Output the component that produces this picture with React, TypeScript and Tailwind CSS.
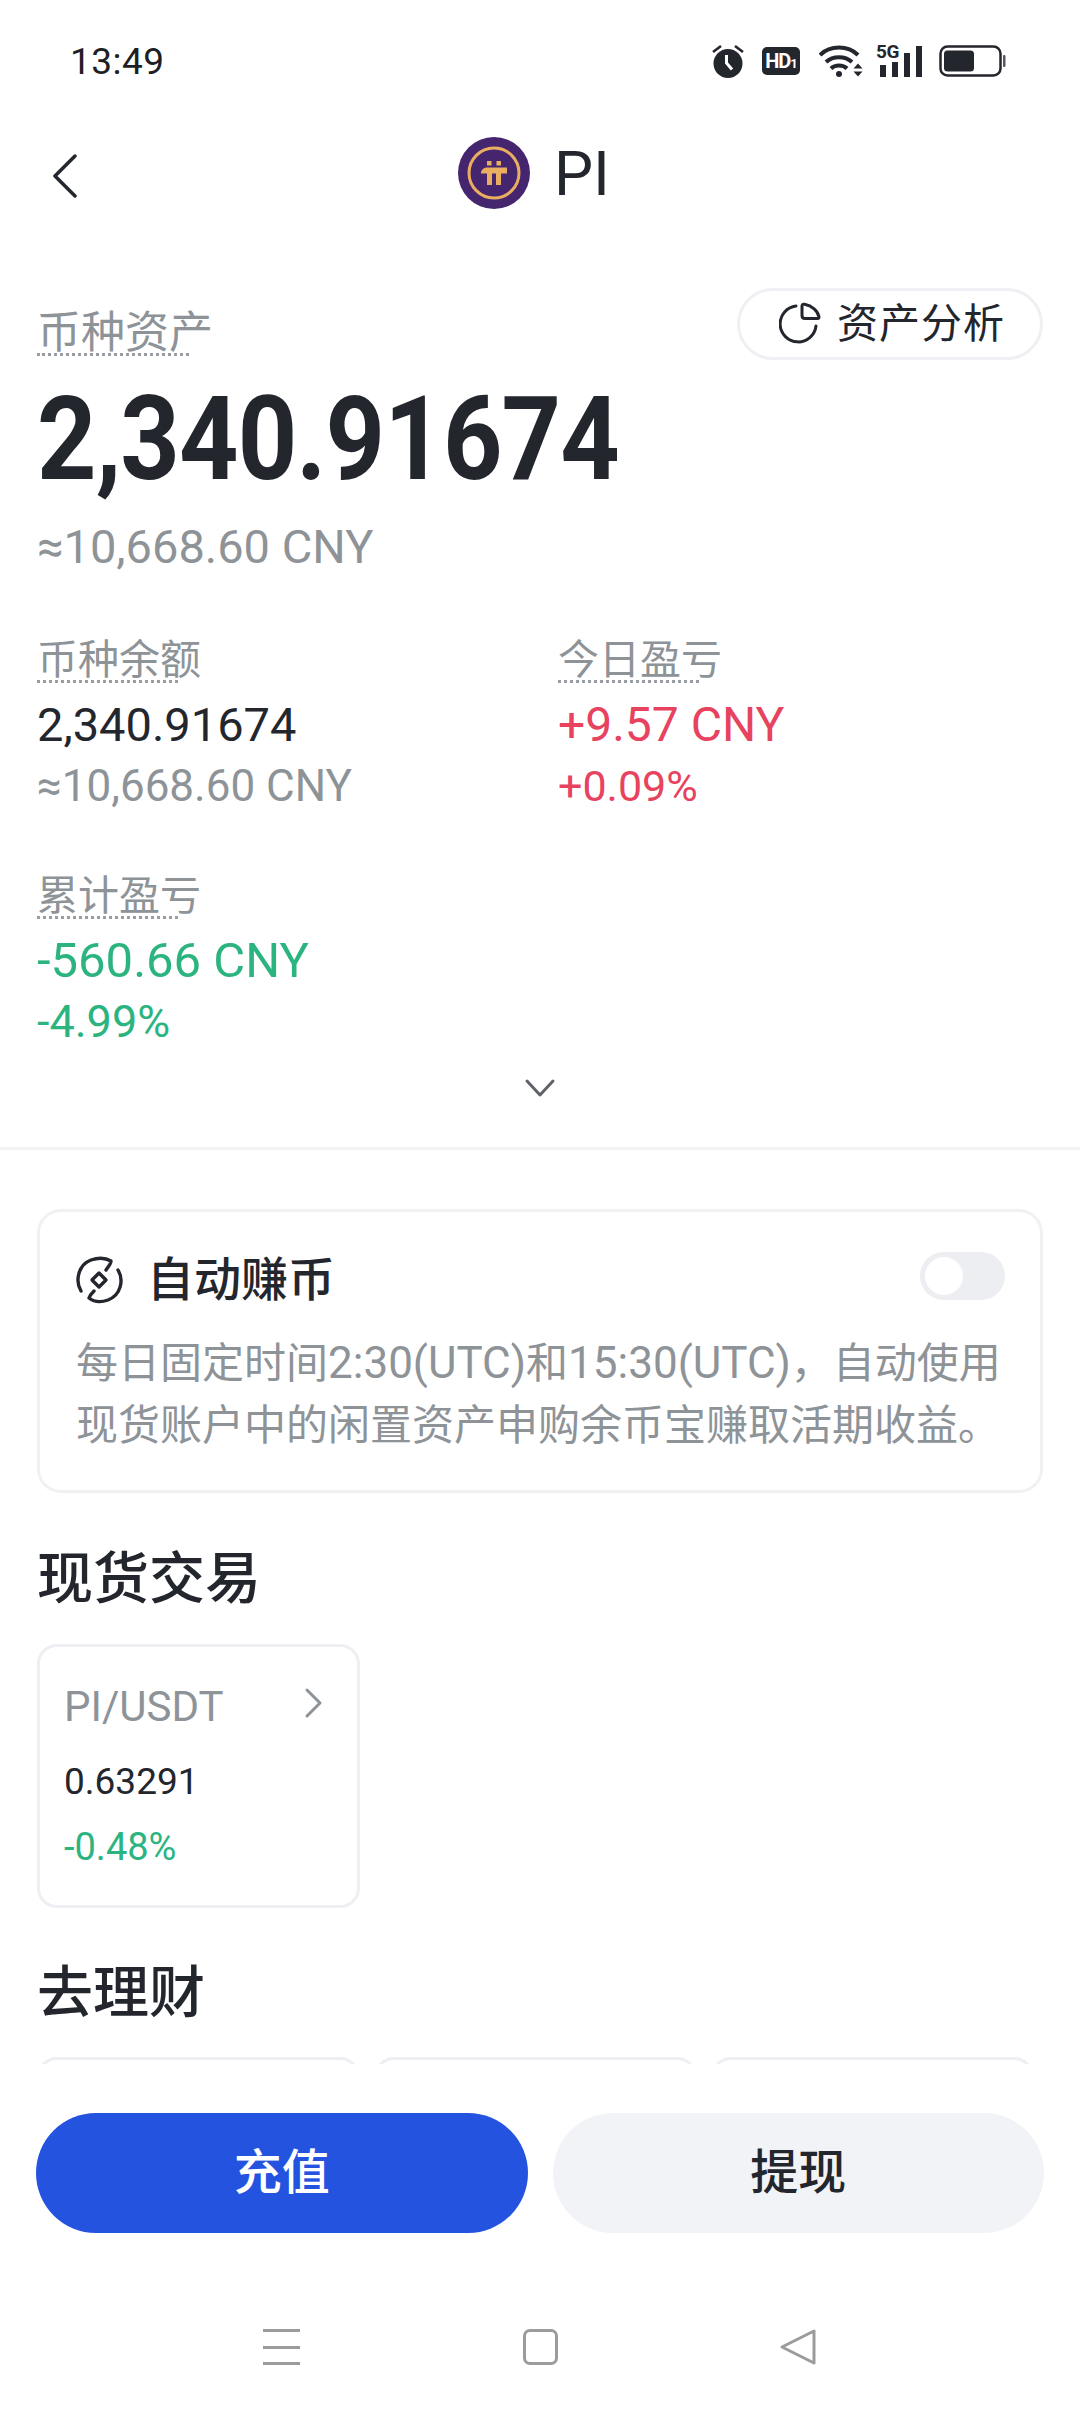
const sans = "font-['Roboto','Noto_Sans_CJK_SC',sans-serif]";

function AlarmIcon() {
  return (
    <svg width="32" height="34" viewBox="0 0 32 34" fill="none">
      <circle cx="16" cy="19.500" r="14.500" fill="#23262d" />
      <path d="M14.500 11v8l5.500 6.500" stroke="#fff" strokeWidth="3" />
      <path d="M1 8l8-6M31 8l-8-6" stroke="#23262d" strokeWidth="2.600" />
    </svg>
  );
}

function WifiIcon() {
  return (
    <svg width="44" height="34" viewBox="0 0 44 34" fill="none">
      <path d="M1 11C11 1 29 1 39 11" stroke="#23262d" strokeWidth="4" />
      <path d="M7 18C14 11.500 26 11.500 33 18" stroke="#23262d" strokeWidth="4" />
      <path d="M12 24.500C16 20.500 24 20.500 28 24.500" stroke="#23262d" strokeWidth="4" />
      <circle cx="20" cy="30" r="3" fill="#23262d" />
      <path d="M34.500 24.500l4.500-5 4.500 5zM34.500 27.500h9l-4.500 5z" fill="#23262d" />
    </svg>
  );
}

function SignalIcon() {
  return (
    <div className="relative w-[47px] h-[34px]">
      <span className="absolute left-0 top-[-2px] text-[19px] leading-[20px] font-bold text-[#23262d] font-['Roboto',sans-serif] tracking-[-0.5px]">
        5G
      </span>
      <svg className="absolute inset-0" width="47" height="34" viewBox="0 0 47 34" fill="#23262d">
        <rect x="4" y="21" width="6" height="12" />
        <rect x="16" y="18" width="6" height="15" />
        <rect x="28" y="9" width="6" height="24" />
        <rect x="40" y="2" width="6" height="31" />
      </svg>
    </div>
  );
}

function BatteryIcon() {
  return (
    <svg width="67" height="32" viewBox="0 0 67 32" fill="none">
      <rect x="1.500" y="1.500" width="60" height="29" rx="7" stroke="#23262d" strokeWidth="2.500" />
      <rect x="5" y="5.500" width="30" height="21" rx="3.500" fill="#23262d" />
      <rect x="64" y="10" width="2.500" height="12" rx="1" fill="#55585e" />
    </svg>
  );
}

function PiLogo() {
  return (
    <svg width="72" height="72" viewBox="0 0 72 72" fill="none">
      <circle cx="36" cy="36" r="36" fill="#46256f" />
      <circle cx="36" cy="36" r="25" stroke="#eaae60" strokeWidth="3" />
      <path d="M23 35c1-3 3-4.500 6-4.500h20v6H23z" fill="#eaae60" />
      <rect x="29" y="34" width="5" height="14" fill="#eaae60" />
      <rect x="38" y="34" width="5" height="14" fill="#eaae60" />
      <rect x="29" y="24" width="4.500" height="4.500" fill="#eaae60" />
      <rect x="38.500" y="24" width="4.500" height="4.500" fill="#eaae60" />
    </svg>
  );
}

function PieIcon() {
  return (
    <svg width="44" height="44" viewBox="10 8 44 44" fill="none" stroke="#23262d" strokeWidth="3" strokeLinecap="round" strokeLinejoin="round">
      <path d="M27 12A18 18 0 1 0 47 32" />
      <path d="M33 12c0-1.500 1-2 2.500-1.800C43 11.500 49 17 50 23c0 1-.5 1.500-1.500 1.500H36c-2 0-3-1-3-3z" />
    </svg>
  );
}

function EarnIcon() {
  return (
    <svg width="50" height="52" viewBox="8 6 50 52" fill="none" stroke="#23262d" strokeWidth="3.400" strokeLinecap="round" strokeLinejoin="round">
      <path d="M15 43C9 33 12 17 25 12 32 9.500 40 10 45 13 45 16 42 19 40 22" />
      <path d="M52 22C58 32 55 47 42 52 35 54.500 28 54 23 50 24 47 26 45 28 43" />
      <path d="M33 25l7 7-7 7-7-7z" />
    </svg>
  );
}

function BackIcon() {
  return (
    <svg width="26" height="44" viewBox="0 0 26 44" fill="none" stroke="#23262d" strokeWidth="3.500" strokeLinecap="round" strokeLinejoin="round">
      <path d="M23 2L3 22l20 20" />
    </svg>
  );
}

// gray label with the short dashed line under it
function Label({ text, size, lineClass }: { text: string; size: string; lineClass: string }) {
  return (
    <div>
      <div className={`${size} leading-[50px] text-[#8e9398]`}>{text}</div>
      <div className={`h-0 -mt-[5px] border-b-[3px] border-dotted border-[#9a9ea3] ${lineClass}`}></div>
    </div>
  );
}

export default function App() {
  const cards = ["a", "b", "c"];

  return (
    <div className={`${sans} w-[1080px] h-[2412px] bg-white flex flex-col overflow-hidden text-[#23262d]`}>
      {/* status bar */}
      <div className="h-[122px] shrink-0 flex items-center justify-between pl-[70px] pr-[74px]">
        <span className="text-[37px] tracking-[0.5px] text-[#1d1f24] mt-[2px]">13:49</span>
        <div className="flex items-center">
          <AlarmIcon />
          <div className="ml-[18px] w-[38px] h-[28px] rounded-[5px] bg-[#23262d] text-white text-[20px] leading-[28px] font-bold text-center tracking-[-1px]">
            HD<span className="text-[13px]">1</span>
          </div>
          <div className="ml-[19px]">
            <WifiIcon />
          </div>
          <div className="ml-[13px]">
            <SignalIcon />
          </div>
          <div className="ml-[16px]">
            <BatteryIcon />
          </div>
        </div>
      </div>

      {/* title */}
      <div className="relative h-[102px] shrink-0 flex items-center justify-center gap-[24px] pr-[12px]">
        <div className="absolute left-[52px] top-[32px]">
          <BackIcon />
        </div>
        <PiLogo />
        <span className="text-[62px] text-[#23262d]">PI</span>
      </div>

      <div className="flex-1 min-h-0 overflow-hidden">
        <div className="px-[37px]">
          <div className="flex justify-between items-start pt-[64px] h-[134px]">
            <div className="pt-[20px]">
              <Label text="币种资产" size="text-[44px]" lineClass="w-[152px]" />
            </div>
            <div className="h-[72px] w-[306px] rounded-full border-[3px] border-[#eff0f3] flex items-center pl-[39px] gap-[14px]">
              <PieIcon />
              <span className="text-[41px] leading-none tracking-[1px]">资产分析</span>
            </div>
          </div>
          <div className="text-[116px] leading-[120px] font-bold tracking-[-1px] mt-[21px] origin-left scale-x-[0.895] whitespace-nowrap">
            2,340.91674
          </div>
          <div className="text-[47px] leading-[60px] text-[#8e9398] mt-[18px]">≈10,668.60 CNY</div>

          <div className="grid grid-cols-[521px_1fr] mt-[58px]">
            <div>
              <Label text="币种余额" size="text-[41px]" lineClass="w-[141px]" />
              <div className="text-[47px] leading-[60px] mt-[12px]">2,340.91674</div>
              <div className="text-[44px] leading-[60px] text-[#8e9398] mt-[1px]">≈10,668.60 CNY</div>
            </div>
            <div>
              <Label text="今日盈亏" size="text-[41px]" lineClass="w-[141px]" />
              <div className="text-[48px] leading-[60px] mt-[12px] text-[#e7435f]">+9.57 CNY</div>
              <div className="text-[43px] leading-[60px] mt-[1px] text-[#e7435f]">+0.09%</div>
            </div>
          </div>

          <div className="mt-[55px]">
            <Label text="累计盈亏" size="text-[41px]" lineClass="w-[141px]" />
            <div className="text-[49px] leading-[60px] mt-[12px] text-[#2bb47f]">-560.66 CNY</div>
            <div className="text-[45px] leading-[60px] mt-[1px] text-[#2bb47f]">-4.99%</div>
          </div>
        </div>

        <div className="flex justify-center h-[98px] pt-[17px] border-b-[3px] border-[#f1f2f4]">
          <svg width="32" height="24" viewBox="0 0 32 24" fill="none" stroke="#5f6368" strokeWidth="3" strokeLinecap="round" strokeLinejoin="round" className="mt-[8px]">
            <path d="M3 4l13 14L29 4" />
          </svg>
        </div>

        <div className="px-[37px]">
          <div className="mt-[59px] h-[284px] rounded-[24px] border-[3px] border-[#f0f1f3] pl-[34px] pr-[35px] pt-[38px]">
            <div className="flex items-center justify-between h-[60px]">
              <div className="flex items-center gap-[23px]">
                <EarnIcon />
                <span className="text-[47px] font-medium">自动赚币</span>
              </div>
              <div className="w-[85px] h-[48px] -mt-[9px] rounded-full bg-[#eceef2] p-[5px]">
                <div className="w-[38px] h-[38px] rounded-full bg-white"></div>
              </div>
            </div>
            <p className="text-[42px] leading-[62px] text-[#8e9398] mt-[22px] ml-[2px] whitespace-nowrap">
              每日固定时间<span className="text-[44px]">2:30(UTC)</span>和<span className="text-[44px]">15:30(UTC)</span>，自动使用
              <br />
              现货账户中的闲置资产申购余币宝赚取活期收益。
            </p>
          </div>

          <h2 className="text-[56px] leading-[70px] font-medium mt-[51px]">现货交易</h2>

          <div className="mt-[30px] w-[323px] h-[264px] rounded-[20px] border-[3px] border-[#eeeff2] px-[24px]">
            <div className="flex items-center justify-between pt-[32px]">
              <span className="text-[42px] leading-[56px] text-[#8e9398]">PI/USDT</span>
              <svg width="22" height="32" viewBox="0 0 22 32" fill="none" stroke="#8e9398" strokeWidth="3" strokeLinecap="round" strokeLinejoin="round" className="mr-[9px] -mt-[8px]">
                <path d="M5 3l13 13L5 29" />
              </svg>
            </div>
            <div className="text-[37px] leading-[44px] mt-[25px]">0.63291</div>
            <div className="text-[38px] leading-[44px] mt-[21px] text-[#2bb47f]">-0.48%</div>
          </div>

          <h2 className="text-[56px] leading-[70px] font-medium mt-[50px]">去理财</h2>

          <div className="flex gap-[14px] mt-[29px]">
            {cards.map((c) => (
              <div key={c} className="w-[323px] h-[120px] rounded-[20px] border-[3px] border-[#eeeff2]"></div>
            ))}
          </div>
        </div>
      </div>

      {/* buttons */}
      <div className="shrink-0 bg-white pt-[49px] px-[36px] flex gap-[25px]">
        <button className="flex-1 h-[120px] rounded-full bg-[#2453e0] text-white text-[48px] font-medium">充值</button>
        <button className="flex-1 h-[120px] rounded-full bg-[#f1f3f7] text-[#23262d] text-[48px] font-medium">提现</button>
      </div>

      {/* android nav */}
      <div className="shrink-0 h-[179px] bg-white relative">
        <div className="absolute left-[263px] top-[96px] w-[37px] h-[36px] flex flex-col justify-between">
          <div className="h-[3px] bg-[#9b9b9b]"></div>
          <div className="h-[3px] bg-[#9b9b9b]"></div>
          <div className="h-[3px] bg-[#9b9b9b]"></div>
        </div>
        <div className="absolute left-[523px] top-[96px] w-[35px] h-[36px] rounded-[7px] border-[3px] border-[#9b9b9b]"></div>
        <svg className="absolute left-[778px] top-[94px]" width="40" height="40" viewBox="0 0 40 40" fill="none">
          <path d="M36 4v32L4 20z" stroke="#9b9b9b" strokeWidth="3" strokeLinejoin="round" />
        </svg>
      </div>
    </div>
  );
}
